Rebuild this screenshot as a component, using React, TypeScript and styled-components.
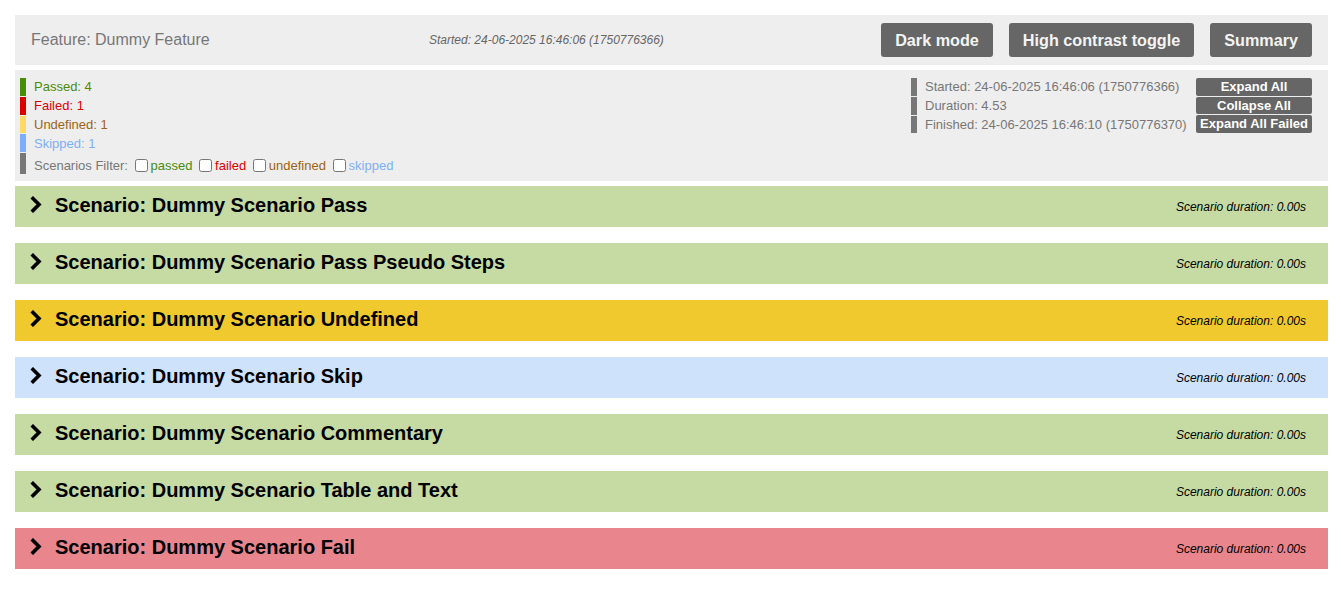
import React from "react";
import styled, { createGlobalStyle } from "styled-components";

const Global = createGlobalStyle`
  html, body { margin: 0; padding: 0; background: #fff; }
  body { font-family: "Liberation Sans", Arial, sans-serif; }
  * { box-sizing: border-box; }
`;

const Page = styled.div`
  padding: 15px 14px 0 15px;
  display: flex;
  flex-direction: column;
`;

const HeaderBar = styled.div`
  height: 50px;
  background: #eeeeee;
  display: flex;
  align-items: center;
  padding: 0 16px;
`;

const FeatureTitle = styled.div`
  font-family: "Liberation Sans", Arial, sans-serif;
  font-size: 16px;
  color: #777;
  width: 398px;
`;

const StartedSmall = styled.div`
  font-family: "Liberation Sans", Arial, sans-serif;
  font-style: italic;
  font-size: 12px;
  color: #666;
  flex: 1;
`;

const HeaderButtons = styled.div`
  display: flex;
  gap: 16px;
`;

const BigButton = styled.button`
  height: 34px;
  padding: 0 14px;
  background: #666;
  color: #f4f4f4;
  border: none;
  border-radius: 3px;
  font-family: "Liberation Sans", Arial, sans-serif;
  font-weight: bold;
  font-size: 16.2px;
  cursor: pointer;
`;

const InfoPanel = styled.div`
  margin-top: 5px;
  height: 111px;
  background: #eeeeee;
  display: flex;
  justify-content: space-between;
  padding: 8px 16px 0 5px;
`;

const LeftCol = styled.div`
  display: flex;
  flex-direction: column;
`;

const StatRow = styled.div<{ $bar: string; $color: string; $h?: number; $pt?: number }>`
  display: flex;
  align-items: center;
  height: ${(p) => p.$h ?? 17.75}px;
  margin-bottom: 1px;
  border-left: 6px solid ${(p) => p.$bar};
  padding-left: 8px;
  padding-top: ${(p) => p.$pt ?? 0}px;
  font-size: 13px;
  color: ${(p) => p.$color};
  white-space: nowrap;
`;

const FilterLabel = styled.label<{ $color: string }>`
  color: ${(p) => p.$color};
  font-size: 13px;
  input {
    margin: 0 3px 0 3px;
    width: 13px;
    height: 13px;
    vertical-align: -2px;
  }
`;

const RightCol = styled.div`
  display: flex;
`;

const TimeCol = styled.div`
  display: flex;
  flex-direction: column;
  width: 285px;
`;

const SmallButtons = styled.div`
  display: flex;
  flex-direction: column;
  gap: 1px;
`;

const SmallButton = styled.button`
  width: 116px;
  height: 17.5px;
  padding: 0;
  background: #666;
  color: #fff;
  border: none;
  border-radius: 2px;
  font-family: "Liberation Sans", Arial, sans-serif;
  font-weight: bold;
  font-size: 13px;
  line-height: 17px;
  cursor: pointer;
`;

const Scenarios = styled.div`
  margin-top: 5px;
  display: flex;
  flex-direction: column;
  gap: 16px;
`;

const ScenarioRow = styled.div<{ $bg: string }>`
  height: 41px;
  background: ${(p) => p.$bg};
  display: flex;
  align-items: center;
  padding: 0 22px 0 15px;
`;

const Chevron = styled.span`
  display: inline-flex;
  width: 25px;
  margin-top: -4px;
  svg {
    width: 12px;
    height: 17px;
  }
`;

const ScenarioTitle = styled.div`
  flex: 1;
  font-weight: bold;
  font-size: 20px;
  color: #000;
  margin-top: -3px;
`;

const Duration = styled.div`
  font-style: italic;
  font-size: 12px;
  color: #000;
`;

const ChevronIcon = () => (
  <svg viewBox="0 0 12 17">
    <polyline
      points="3,2.5 9,8.5 3,14.5"
      fill="none"
      stroke="#000"
      strokeWidth="3.6"
      strokeLinecap="square"
      strokeLinejoin="miter"
    />
  </svg>
);

const scenarios = [
  { name: "Dummy Scenario Pass", bg: "#c6dba4" },
  { name: "Dummy Scenario Pass Pseudo Steps", bg: "#c6dba4" },
  { name: "Dummy Scenario Undefined", bg: "#f0c92f" },
  { name: "Dummy Scenario Skip", bg: "#cfe2fc" },
  { name: "Dummy Scenario Commentary", bg: "#c6dba4" },
  { name: "Dummy Scenario Table and Text", bg: "#c6dba4" },
  { name: "Dummy Scenario Fail", bg: "#e9858d" },
];

export default function App() {
  return (
    <>
      <Global />
      <Page>
        <HeaderBar>
          <FeatureTitle>Feature: Dummy Feature</FeatureTitle>
          <StartedSmall>Started: 24-06-2025 16:46:06 (1750776366)</StartedSmall>
          <HeaderButtons>
            <BigButton>Dark mode</BigButton>
            <BigButton>High contrast toggle</BigButton>
            <BigButton>Summary</BigButton>
          </HeaderButtons>
        </HeaderBar>
        <InfoPanel>
          <LeftCol>
            <StatRow $bar="#4b8b0c" $color="#4b8b0c">Passed: 4</StatRow>
            <StatRow $bar="#d90000" $color="#d90000">Failed: 1</StatRow>
            <StatRow $bar="#ffd966" $color="#9c6414">Undefined: 1</StatRow>
            <StatRow $bar="#7eaef8" $color="#7eaef8">Skipped: 1</StatRow>
            <StatRow $bar="#777" $color="#777" $h={21} $pt={3}>
              <span>
                Scenarios Filter:{" "}
                <FilterLabel $color="#4b8b0c"><input type="checkbox" />passed</FilterLabel>{" "}
                <FilterLabel $color="#d90000"><input type="checkbox" />failed</FilterLabel>{" "}
                <FilterLabel $color="#9c6414"><input type="checkbox" />undefined</FilterLabel>{" "}
                <FilterLabel $color="#7eaef8"><input type="checkbox" />skipped</FilterLabel>
              </span>
            </StatRow>
          </LeftCol>
          <RightCol>
            <TimeCol>
              <StatRow $bar="#777" $color="#777">Started: 24-06-2025 16:46:06 (1750776366)</StatRow>
              <StatRow $bar="#777" $color="#777">Duration: 4.53</StatRow>
              <StatRow $bar="#777" $color="#777">Finished: 24-06-2025 16:46:10 (1750776370)</StatRow>
            </TimeCol>
            <SmallButtons>
              <SmallButton>Expand All</SmallButton>
              <SmallButton>Collapse All</SmallButton>
              <SmallButton>Expand All Failed</SmallButton>
            </SmallButtons>
          </RightCol>
        </InfoPanel>
        <Scenarios>
          {scenarios.map((s) => (
            <ScenarioRow key={s.name} $bg={s.bg}>
              <Chevron><ChevronIcon /></Chevron>
              <ScenarioTitle>Scenario: {s.name}</ScenarioTitle>
              <Duration>Scenario duration: 0.00s</Duration>
            </ScenarioRow>
          ))}
        </Scenarios>
      </Page>
    </>
  );
}
